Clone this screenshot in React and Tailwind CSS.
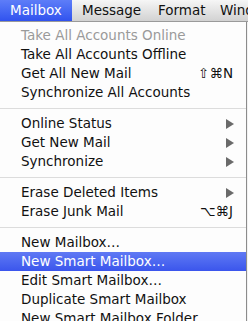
const barItems = [
  { name: 'Mailbox', cls: 'w-[72px] pl-[10px]' },
  { name: 'Message', cls: 'w-[76px] pl-[10px]' },
  { name: 'Format', cls: 'w-[66px] pl-[10px]' },
  { name: 'Window', cls: 'pl-[6px]' },
];

const groups = [
  [
    { label: 'Take All Accounts Online', disabled: true },
    { label: 'Take All Accounts Offline' },
    { label: 'Get All New Mail', shortcut: '⇧⌘N' },
    { label: 'Synchronize All Accounts' },
  ],
  [
    { label: 'Online Status', submenu: true },
    { label: 'Get New Mail', submenu: true },
    { label: 'Synchronize', submenu: true },
  ],
  [
    { label: 'Erase Deleted Items', submenu: true },
    { label: 'Erase Junk Mail', shortcut: '⌥⌘J' },
  ],
  [
    { label: 'New Mailbox…' },
    { label: 'New Smart Mailbox…', active: true },
    { label: 'Edit Smart Mailbox…' },
    { label: 'Duplicate Smart Mailbox' },
    { label: 'New Smart Mailbox Folder' },
  ],
];

const Arrow = ({ active }) => (
  <svg width="8" height="10" viewBox="0 0 8 10" className="mr-[12px]">
    <path d="M0 0 L8 5 L0 10 Z" fill={active ? '#fff' : '#6a6a6a'} />
  </svg>
);

const MenuRow = ({ item }) => {
  const color = item.active
    ? 'text-white bg-gradient-to-b from-[#6079f4] to-[#3b55ec]'
    : item.disabled
      ? 'text-[#9a9a9a]'
      : 'text-[#111]';
  return (
    <div className={`h-[19px] flex items-center justify-between pl-[21px] ${color}`}>
      <span>{item.label}</span>
      {item.shortcut && <span className="pr-[13px]">{item.shortcut}</span>}
      {item.submenu && <Arrow active={item.active} />}
    </div>
  );
};

const App = () => {
  return (
    <div className="w-[248px] h-[321px] overflow-hidden bg-[#f2f2f2] text-[13.5px] leading-none font-['DejaVu_Sans',sans-serif]">
      {/* Menu bar */}
      <div className="h-[22px] flex bg-gradient-to-b from-[#f6f6f6] to-[#d2d2d2] border-b border-[#9a9a9a] whitespace-nowrap">
        {barItems.map((item, i) => (
          <div
            key={item.name}
            className={`h-full shrink-0 flex items-center ${item.cls} ${
              i === 0 ? 'text-white bg-gradient-to-b from-[#5e7df8] to-[#3152ee]' : 'text-[#111]'
            }`}
          >
            {item.name}
          </div>
        ))}
      </div>

      {/* Dropdown */}
      <div className="w-[247px] bg-[#fdfdfd] border-r border-[#8c8c8c] pt-[4px] whitespace-nowrap">
        {groups.map((group, gi) => (
          <div key={gi}>
            {gi > 0 && (
              <div className="h-[12px] flex items-center">
                <div className="w-full h-px bg-[#dcdcdc]" />
              </div>
            )}
            {group.map((item) => (
              <MenuRow key={item.label} item={item} />
            ))}
          </div>
        ))}
      </div>
    </div>
  );
};

export default App;
